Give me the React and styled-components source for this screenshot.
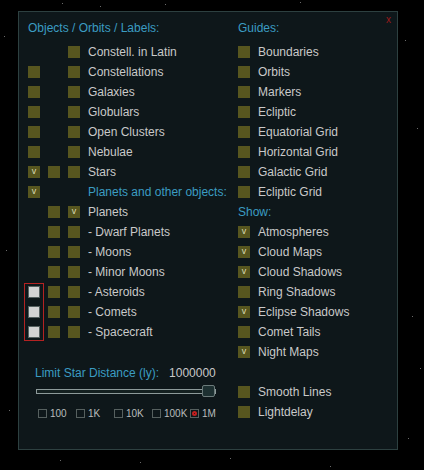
import React from 'react'
import styled, { createGlobalStyle, css } from 'styled-components'

const GlobalStyle = createGlobalStyle`
  html, body {
    margin: 0;
    background: #000;
  }
  body {
    font-family: "Liberation Sans", Arial, sans-serif;
  }
`;

const Sky = styled.div`
  position: relative;
  width: 424px;
  height: 470px;
  overflow: hidden;
  background: #000;
  padding: 11px 0 0 18px;
  box-sizing: border-box;
`;

const StarField = styled.svg`
  position: absolute;
  left: 0;
  top: 0;
`;

const Panel = styled.div`
  position: relative;
  width: 380px;
  height: 439px;
  box-sizing: border-box;
  border: 1px solid #2d4040;
  background: #0e171a;
  padding: 6px 0 0 9px;
  display: grid;
  grid-template-columns: 210px 1fr;
  color: #c9c9c9;
  font-size: 12px;
`;

const Close = styled.div`
  position: absolute;
  top: 2px;
  right: 6px;
  font-size: 10px;
  line-height: 12px;
  color: #9c1a1a;
`;

const Column = styled.div`
  display: flex;
  flex-direction: column;
`;

const Heading = styled.div`
  height: 20px;
  line-height: 20px;
  color: #3b9cc2;
  margin-bottom: ${p => (p.$title ? '4px' : '0')};
`;

const Row = styled.div`
  display: flex;
  align-items: center;
  height: 20px;
  margin-top: ${p => p.$gap || 0}px;
`;

const Slot = styled.div`
  width: 20px;
  height: 20px;
  display: flex;
  align-items: center;
`;

const Box = styled.div`
  width: 12px;
  height: 12px;
  box-sizing: border-box;
  background: #57561f;
  color: #dcdcb4;
  font-size: 9px;
  line-height: 11px;
  text-align: center;
  ${p => p.$white && css`
    background: #d3d3d3;
    border: 1px solid #55605f;
  `}
`;

const Label = styled.span`
  color: ${p => (p.$blue ? '#3b9cc2' : '#c9c9c9')};
  margin-left: ${p => p.$indent || 0}px;
  white-space: nowrap;
`;

const Highlight = styled.div`
  position: relative;
  &::before {
    content: '';
    position: absolute;
    left: -4px;
    top: 1px;
    width: 20px;
    height: 58px;
    box-sizing: border-box;
    border: 1px solid #b42222;
  }
`;

const LimitRow = styled.div`
  display: flex;
  align-items: center;
  gap: 10px;
  height: 20px;
  margin-top: 21px;
  padding-left: 7px;
`;

const SliderRow = styled.div`
  height: 16px;
  display: flex;
  align-items: center;
  padding-left: 8px;
`;

const Track = styled.div`
  position: relative;
  width: 180px;
  height: 5px;
  box-sizing: border-box;
  border: 1px solid #8d9a9a;
  background: #142020;
`;

const Thumb = styled.div`
  position: absolute;
  right: 0;
  top: -5px;
  width: 13px;
  height: 12px;
  box-sizing: border-box;
  border: 1px solid #6b7a7a;
  border-radius: 2px;
  background: #1d3031;
`;

const Options = styled.div`
  display: flex;
  align-items: center;
  height: 20px;
  margin-top: 4px;
  padding-left: 10px;
`;

const Option = styled.div`
  width: 38px;
  display: flex;
  align-items: center;
  font-size: 10px;
  color: #b8bcbc;
`;

const Square = styled.div`
  width: 9px;
  height: 9px;
  box-sizing: border-box;
  border: 1px solid #56605f;
  margin-right: 3px;
  display: flex;
  align-items: center;
  justify-content: center;
`;

const Dot = styled.div`
  width: 5px;
  height: 5px;
  box-sizing: border-box;
  border-radius: 50%;
  border: 2px solid #c21f1f;
`;

const Check = ({ state }) => {
  if (!state) return <Slot />
  return (
    <Slot>
      <Box $white={state === 'white'}>{state === 'on' ? 'v' : ''}</Box>
    </Slot>
  )
}

const objectRows = [
  { slots: [null, null, 'off'], text: 'Constell. in Latin' },
  { slots: ['off', null, 'off'], text: 'Constellations' },
  { slots: ['off', null, 'off'], text: 'Galaxies' },
  { slots: ['off', null, 'off'], text: 'Globulars' },
  { slots: ['off', null, 'off'], text: 'Open Clusters' },
  { slots: ['off', null, 'off'], text: 'Nebulae' },
  { slots: ['on', 'off', 'off'], text: 'Stars' },
  { slots: ['on', null, null], text: 'Planets and other objects:', blue: true },
  { slots: [null, 'off', 'on'], text: 'Planets' },
  { slots: [null, 'off', 'off'], text: '- Dwarf Planets' },
  { slots: [null, 'off', 'off'], text: '- Moons' },
  { slots: [null, 'off', 'off'], text: '- Minor Moons' },
]

const smallBodies = ['- Asteroids', '- Comets', '- Spacecraft']

const guides = ['Boundaries', 'Orbits', 'Markers', 'Ecliptic', 'Equatorial Grid', 'Horizontal Grid', 'Galactic Grid', 'Ecliptic Grid']

const shows = [
  ['Atmospheres', true],
  ['Cloud Maps', true],
  ['Cloud Shadows', true],
  ['Ring Shadows', false],
  ['Eclipse Shadows', true],
  ['Comet Tails', false],
  ['Night Maps', true],
]

const distances = ['100', '1K', '10K', '100K', '1M']

const stars = [
  [4, 36], [62, 3], [165, 4], [300, 2], [405, 40], [417, 128], [412, 316], [420, 368],
  [408, 438], [60, 460], [140, 462], [230, 458], [6, 250], [9, 410], [330, 466], [100, 6],
]

const ObjectRow = ({ slots, text, blue }) => (
  <Row>
    {slots.map((s, i) => <Check key={i} state={s} />)}
    <Label $blue={blue}>{text}</Label>
  </Row>
)

const ToggleRow = ({ on, text, gap }) => (
  <Row $gap={gap}>
    <Box>{on ? 'v' : ''}</Box>
    <Label $indent={8}>{text}</Label>
  </Row>
)

export default function App() {
  return (
    <>
      <GlobalStyle />
      <Sky>
        <StarField width="424" height="470">
          {stars.map(([x, y], i) => (
            <rect key={i} x={x} y={y} width="1" height="1" fill="#6a6a6a" />
          ))}
        </StarField>
        <Panel>
          <Close>x</Close>
          <Column>
            <Heading $title>Objects / Orbits / Labels:</Heading>
            {objectRows.map(r => <ObjectRow key={r.text} {...r} />)}
            <Highlight>
              {smallBodies.map(t => (
                <ObjectRow key={t} slots={['white', 'off', 'off']} text={t} />
              ))}
            </Highlight>
            <LimitRow>
              <Label $blue>Limit Star Distance (ly):</Label>
              <Label>1000000</Label>
            </LimitRow>
            <SliderRow>
              <Track>
                <Thumb />
              </Track>
            </SliderRow>
            <Options>
              {distances.map(d => (
                <Option key={d}>
                  <Square>{d === '1M' && <Dot />}</Square>
                  {d}
                </Option>
              ))}
            </Options>
          </Column>
          <Column>
            <Heading $title>Guides:</Heading>
            {guides.map(g => <ToggleRow key={g} text={g} />)}
            <Heading>Show:</Heading>
            {shows.map(([t, on]) => <ToggleRow key={t} text={t} on={on} />)}
            <ToggleRow text="Smooth Lines" gap={20} />
            <ToggleRow text="Lightdelay" />
          </Column>
        </Panel>
      </Sky>
    </>
  )
}
